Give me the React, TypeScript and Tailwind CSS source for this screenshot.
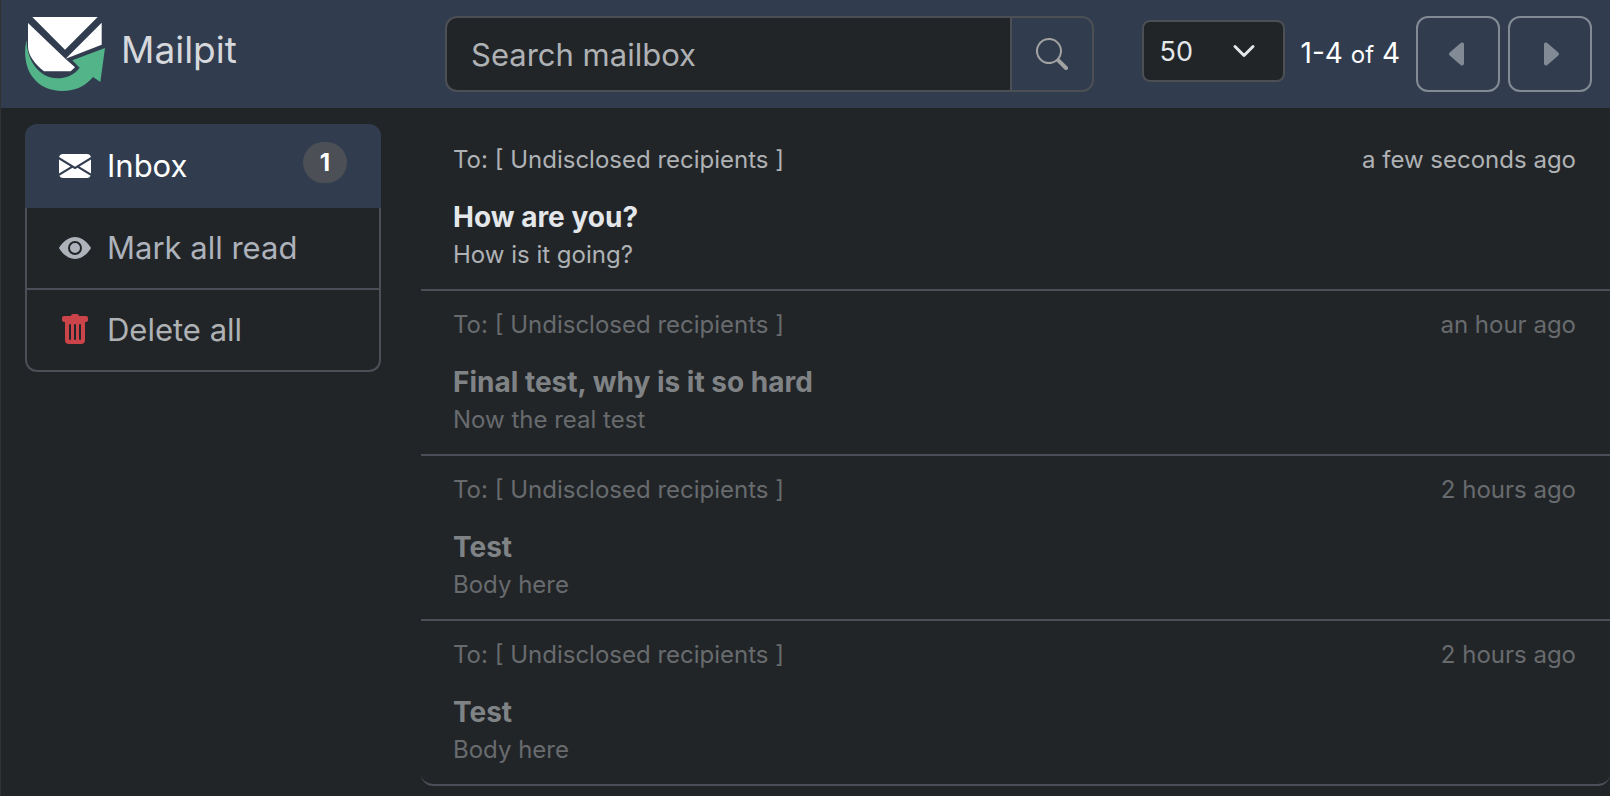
import {
  BsCaretLeftFill,
  BsCaretRightFill,
  BsChevronDown,
  BsEnvelopeFill,
  BsEyeFill,
  BsSearch,
  BsTrashFill,
} from "react-icons/bs";

const messages = [
  { id: 1, subject: "How are you?", snippet: "How is it going?", created: "a few seconds ago", read: false },
  { id: 2, subject: "Final test, why is it so hard", snippet: "Now the real test", created: "an hour ago", read: true },
  { id: 3, subject: "Test", snippet: "Body here", created: "2 hours ago", read: true },
  { id: 4, subject: "Test", snippet: "Body here", created: "2 hours ago", read: true },
];

function Logo() {
  return (
    <svg viewBox="75 48 240 225" className="h-[75px] w-20 shrink-0" aria-hidden="true">
      <path fill="#fff" d="M97 51H293L195 149Z" />
      <path fill="#fff" d="M84 69L197 177L225 202L212 214H132C104 192 84 164 84 140Z" />
      <path fill="#fff" d="M305 68V134L197 176Z" />
      <path
        fill="#53b389"
        d="M79 123C72 155 74 196 96 229C118 260 150 273 187 273C226 273 256 258 279 231L301 246L315 144L217 181L239 203C221 226 197 235 172 235C118 235 80 180 80 123Z"
      />
    </svg>
  );
}

function Header() {
  return (
    <header className="flex h-[108px] items-start bg-[#313d4f] pt-4">
      <div className="w-[404px] shrink-0 px-6">
        <a href="#" className="flex items-start gap-4 text-[37px] leading-[68px] text-[#d6d8dc]">
          <Logo />
          Mailpit
        </a>
      </div>

      <form className="ml-10 flex h-[76px] flex-1">
        <input
          type="text"
          aria-label="Search mailbox"
          placeholder="Search mailbox"
          className="min-w-0 flex-1 rounded-l-xl border-2 border-r-0 border-[#4c4f54] bg-[#222528] px-6 pt-0.5 text-[31px] text-[#dee2e6] placeholder:text-[#afb2b5]"
        />
        <button
          type="submit"
          aria-label="Search"
          className="flex w-[84px] items-center justify-center rounded-r-xl border-2 border-[#4c4f54] text-[#a2a2a2]"
        >
          <BsSearch size={32} />
        </button>
      </form>

      <div className="ml-12 flex shrink-0 pr-[18px]">
        <div className="relative mt-1 h-[62px] w-[143px]">
          <select
            aria-label="Messages per page"
            defaultValue="50"
            className="size-full appearance-none rounded-lg border-2 border-[#4c4f54] bg-[#222528] pt-0.5 pl-4 text-[27px] text-[#e4e7ea]"
          >
            <option>25</option>
            <option>50</option>
            <option>100</option>
          </select>
          <BsChevronDown
            size={24}
            strokeWidth={1}
            className="pointer-events-none absolute top-[19px] right-[29px] text-[#e4e7ea]"
          />
        </div>
        <span className="mx-4 text-[28px] leading-[74px] text-white">
          1-4 <small className="text-2xl">of</small> 4
        </span>
        <div className="flex gap-2">
          <button
            type="button"
            aria-label="Previous page"
            className="flex h-[76px] w-[84px] items-center justify-center rounded-xl border-2 border-[#828a95] text-[#828a95]"
          >
            <BsCaretLeftFill size={32} />
          </button>
          <button
            type="button"
            aria-label="Next page"
            className="flex h-[76px] w-[84px] items-center justify-center rounded-xl border-2 border-[#828a95] text-[#828a95]"
          >
            <BsCaretRightFill size={32} />
          </button>
        </div>
      </div>
    </header>
  );
}

function Sidebar() {
  return (
    <nav className="w-[404px] shrink-0 px-6 pt-4 text-[31px]">
      <button
        type="button"
        className="flex h-[84px] w-full items-center rounded-t-xl bg-[#313d4f] px-[34px] text-left text-white"
      >
        <BsEnvelopeFill size={32} className="mr-4" />
        Inbox
        <span className="mb-2 ml-auto rounded-full bg-[#4c5056] px-[17px] text-2xl leading-[41px] font-bold">1</span>
      </button>
      <button
        type="button"
        className="flex h-[82px] w-full items-center gap-4 border-2 border-t-0 border-[#4c4f57] px-8 text-left text-[#adb2bb]"
      >
        <BsEyeFill size={32} />
        Mark all read
      </button>
      <button
        type="button"
        className="flex h-[82px] w-full items-center gap-4 rounded-b-xl border-2 border-t-0 border-[#4c4f57] px-8 text-left text-[#afb2b5]"
      >
        <BsTrashFill size={32} className="text-[#cb444a]" />
        Delete all
      </button>
    </nav>
  );
}

function MessageList() {
  return (
    <main className="ml-4 min-w-0 flex-1 pt-[18px]">
      {messages.map((message) => (
        <a
          key={message.id}
          href="#"
          className={`block border-b-2 border-[#4c4f57] py-4 pr-[34px] pl-8 text-2xl leading-9 last:rounded-b-xl ${
            message.read ? "text-[#686b6e]" : "text-[#afb2b5]"
          }`}
        >
          <div className="flex justify-between">
            <span>To: [ Undisclosed recipients ]</span>
            <span>{message.created}</span>
          </div>
          <div
            className={`mt-5 text-[28px] leading-[39px] font-bold ${
              message.read ? "text-[#808386]" : "text-[#e4e7ea]"
            }`}
          >
            {message.subject}
          </div>
          <div>{message.snippet}</div>
        </a>
      ))}
    </main>
  );
}

export default function App() {
  return (
    <div className="min-h-screen border-l border-[#303236] bg-[#222528] font-['Inter',sans-serif]">
      <Header />
      <div className="flex">
        <Sidebar />
        <MessageList />
      </div>
    </div>
  );
}
